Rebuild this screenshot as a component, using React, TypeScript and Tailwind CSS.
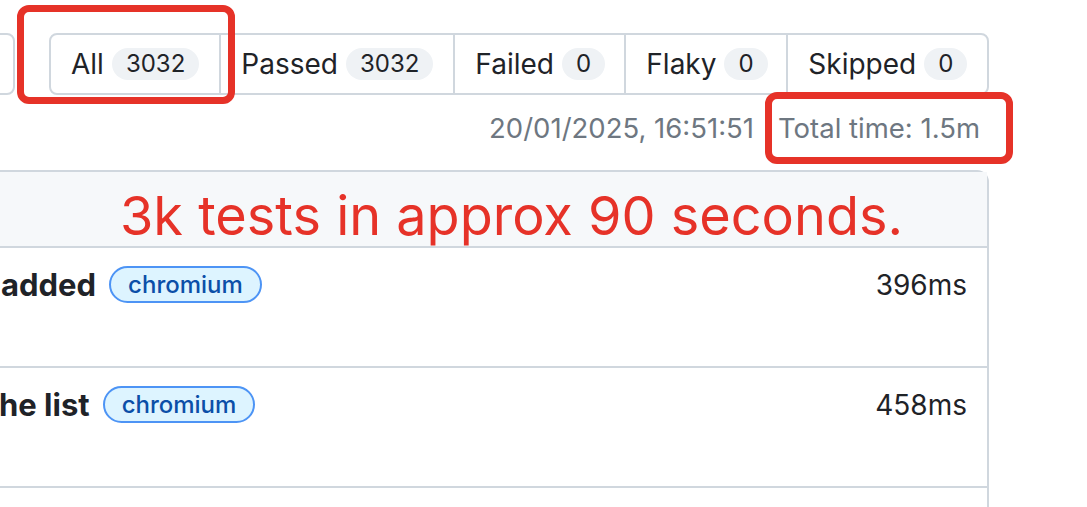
import React from "react";

const tabs = [
  { label: "All", count: "3032", width: "w-[172px]" },
  { label: "Passed", count: "3032", width: "w-[234px]" },
  { label: "Failed", count: "0", width: "w-[171px]" },
  { label: "Flaky", count: "0", width: "w-[162px]" },
  { label: "Skipped", count: "0", width: "w-[201px]" },
];

// only the tail of each test title is inside the screenshot
const rows = [
  { title: "added", time: "396ms", titleMargin: "ml-[1px]" },
  { title: "he list", time: "458ms", titleMargin: "ml-[-1px]" },
];

const App = () => {
  return (
    <div className="relative h-[507px] w-[1087px] overflow-hidden bg-white font-['Inter','Noto_Sans',sans-serif] text-[#1f2328]">
      <div className="w-[989px] pt-[33px]">
        {/* Filter bar */}
        <div className="flex h-[62px]">
          <div className="ml-[-20px] w-[35px] rounded-[8px] border-2 border-[#d0d7de] bg-white" />
          <div className="ml-[34px] flex w-[940px] overflow-hidden rounded-[8px] border-2 border-[#d0d7de]">
            {tabs.map((tab, i) => (
              <div
                key={tab.label}
                className={`${tab.width} flex items-center px-[20px] ${i > 0 ? "border-l-2 border-[#d0d7de]" : ""}`}
              >
                <span className="text-[28px] leading-none">{tab.label}</span>
                <span className="ml-[8px] flex h-[32px] items-center rounded-full bg-[#eff2f5] px-[14px] text-[24px] leading-none">
                  {tab.count}
                </span>
              </div>
            ))}
          </div>
        </div>

        {/* Meta line */}
        <div className="flex h-[68px] items-center justify-end gap-[24px] pr-[9px] text-[27.5px] text-[#6e7781]">
          <span>20/01/2025, 16:51:51</span>
          <span>Total time: 1.5m</span>
        </div>

        {/* Results panel */}
        <div className="ml-[-20px] mt-[7px] rounded-tr-[12px] border-2 border-[#d0d7de]">
          <div className="h-[76px] border-b-2 border-[#d0d7de] bg-[#f6f8fa] pl-[138px] pt-[17px]">
            <span className="whitespace-nowrap text-[54px] leading-none text-[#e63228]">
              3k tests in approx 90 seconds.
            </span>
          </div>
          {rows.map((row) => (
            <div
              key={row.time}
              className="flex h-[120px] items-start justify-between border-b-2 border-[#d0d7de] pl-[18px] pr-[20px] pt-[18px]"
            >
              <div className="flex h-[37px] items-center">
                <span className={`${row.titleMargin} whitespace-nowrap text-[31px] font-bold leading-none`}>
                  {row.title}
                </span>
                <span className="ml-[13px] flex h-[37px] items-center rounded-full border-2 border-[#4d94f5] bg-[#ddf4ff] px-[17px] text-[24px] font-medium leading-none text-[#0b4fa8]">
                  chromium
                </span>
              </div>
              <span className="flex h-[37px] items-center text-[28px] leading-none">{row.time}</span>
            </div>
          ))}
          <div className="h-[40px]" />
        </div>
      </div>

      {/* Annotation boxes */}
      <div className="absolute left-[17px] top-[5px] h-[99px] w-[218px] rounded-[12px] border-[7px] border-[#e63228]" />
      <div className="absolute left-[765px] top-[92px] h-[72px] w-[248px] rounded-[12px] border-[7px] border-[#e63228]" />
    </div>
  );
};

export default App;
